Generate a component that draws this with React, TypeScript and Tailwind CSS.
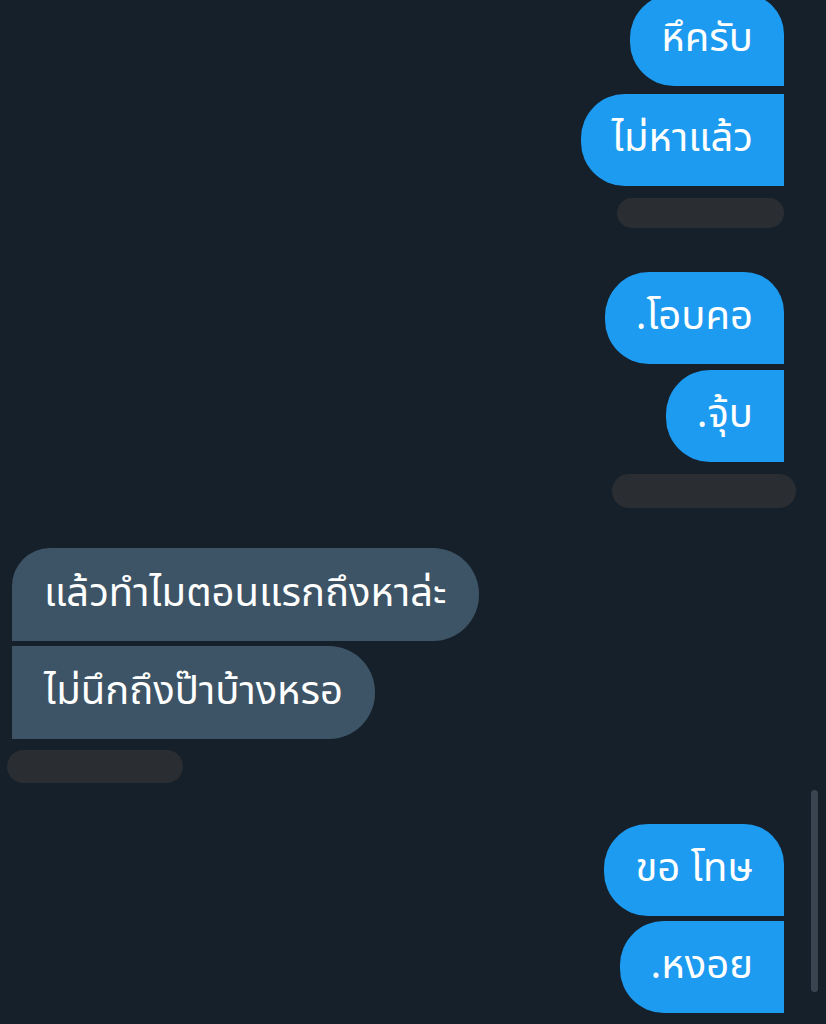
import React from 'react';

type Msg = {
  text: string;
  corners: string;
};

function Sent({ text, corners }: Msg) {
  return (
    <div className="flex justify-end pr-[42px]">
      <div
        className={`h-[92px] flex items-center px-[31px] pb-[2px] bg-[#1d9bf0] text-white text-[40px] leading-none ${corners}`}
      >
        {text}
      </div>
    </div>
  );
}

function Received({ text, corners }: Msg) {
  return (
    <div className="flex justify-start pl-[12px]">
      <div
        className={`h-[93px] flex items-center px-[32px] pb-[2px] bg-[#3d5466] text-white text-[40px] leading-none ${corners}`}
      >
        {text}
      </div>
    </div>
  );
}

export default function App() {
  return (
    <div
      className="relative w-full h-[1024px] overflow-hidden bg-[#16202a]"
      style={{ fontFamily: '"Noto Sans Thai", "Noto Sans", "DejaVu Sans", sans-serif' }}
    >
      <div className="flex flex-col -mt-[6px]">
        {/* กลุ่มที่ 1 */}
        <Sent text="หึครับ" corners="rounded-l-[44px] rounded-tr-[40px]" />
        <div className="h-[8px]" />
        <Sent text="ไม่หาแล้ว" corners="rounded-l-[44px]" />
        <div className="h-[12px]" />
        <div className="flex justify-end pr-[42px]">
          <div className="w-[167px] h-[30px] rounded-full bg-[#2a2e33]" />
        </div>

        {/* กลุ่มที่ 2 */}
        <div className="h-[44px]" />
        <Sent text=".โอบคอ" corners="rounded-l-[44px] rounded-tr-[40px]" />
        <div className="h-[6px]" />
        <Sent text=".จุ้บ" corners="rounded-l-[44px]" />
        <div className="h-[12px]" />
        <div className="flex justify-end pr-[30px]">
          <div className="w-[184px] h-[34px] rounded-full bg-[#2a2e33]" />
        </div>

        {/* ข้อความที่ได้รับ */}
        <div className="h-[40px]" />
        <Received text="แล้วทำไมตอนแรกถึงหาล่ะ" corners="rounded-r-[46px] rounded-tl-[38px]" />
        <div className="h-[5px]" />
        <Received text="ไม่นึกถึงป๊าบ้างหรอ" corners="rounded-r-[46px]" />
        <div className="h-[11px]" />
        <div className="flex justify-start pl-[7px]">
          <div className="w-[176px] h-[33px] rounded-full bg-[#2a2e33]" />
        </div>

        {/* กลุ่มที่ 3 */}
        <div className="h-[41px]" />
        <Sent text="ขอ โทษ" corners="rounded-l-[44px] rounded-tr-[40px]" />
        <div className="h-[5px]" />
        <Sent text=".หงอย" corners="rounded-l-[44px]" />
      </div>

      {/* scrollbar */}
      <div className="absolute left-[811px] top-[790px] w-[7px] h-[202px] rounded-full bg-[#3a4450]" />
    </div>
  );
}
